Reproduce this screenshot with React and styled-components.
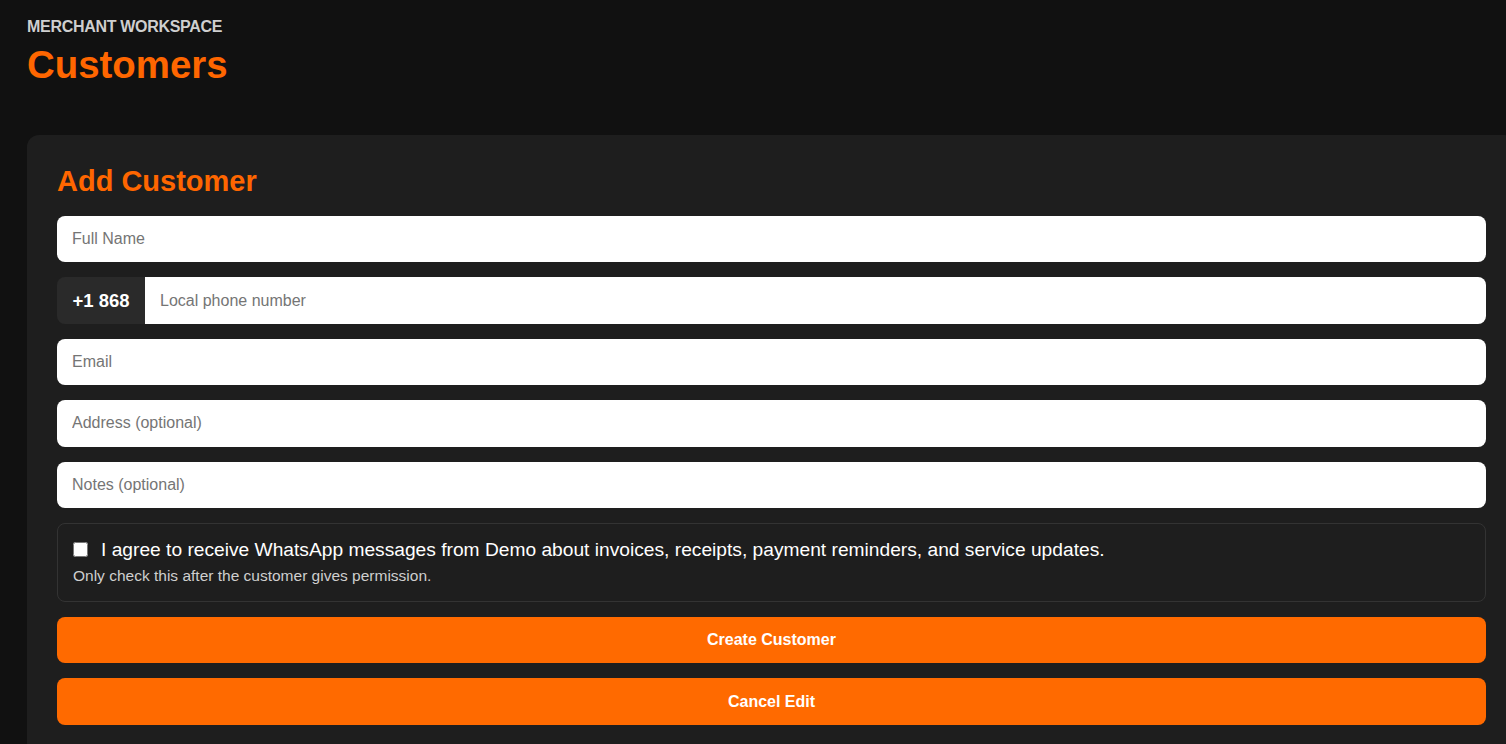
import React from "react";
import styled, { createGlobalStyle } from "styled-components";

const Global = createGlobalStyle`
  html, body { margin: 0; padding: 0; background: #111111; overflow: hidden; }
  body { font-family: "Liberation Sans", Arial, sans-serif; color: #fff; }
  * { box-sizing: border-box; }
`;

const Page = styled.div`
  padding: 18px 0 0 27px;
  width: 1600px;
`;

const Eyebrow = styled.div`
  font-size: 16px;
  font-weight: 700;
  color: #cfcfcf;
  letter-spacing: -0.3px;
  line-height: 18px;
`;

const Title = styled.h1`
  margin: 7px 0 0;
  font-size: 38.4px;
  line-height: 44px;
  font-weight: 700;
  color: #ff6600;
`;

const Card = styled.section`
  margin-top: 48px;
  width: 1489px;
  background: #1e1e1e;
  border-radius: 12px;
  padding: 30px 30px 30px;
  display: flex;
  flex-direction: column;
  gap: 15px;
`;

const CardTitle = styled.h2`
  margin: 0 0 3px;
  font-size: 29px;
  line-height: 33px;
  font-weight: 700;
  color: #ff6600;
`;

const Input = styled.input`
  width: 100%;
  height: 46.4px;
  border: none;
  border-radius: 8px;
  background: #fff;
  padding: 0 15px;
  font-family: inherit;
  font-size: 16px;
  color: #222;
  outline: none;
  &::placeholder { color: #757575; }
`;

const PhoneRow = styled.div`
  display: flex;
  height: 46.4px;
  border-radius: 8px;
  overflow: hidden;
`;

const Prefix = styled.div`
  width: 88px;
  flex: none;
  background: #2a2a2a;
  display: flex;
  align-items: center;
  justify-content: center;
  font-size: 18.5px;
  font-weight: 700;
  color: #fff;
`;

const PhoneInput = styled(Input)`
  height: 100%;
  border-radius: 0;
`;

const Consent = styled.div`
  border: 1px solid #333;
  border-radius: 8px;
  padding: 15px 15px 16px;
  display: flex;
  flex-direction: column;
  gap: 6px;
`;

const ConsentLabel = styled.label`
  display: flex;
  align-items: center;
  gap: 13px;
  font-size: 19.2px;
  line-height: 22px;
  color: #fff;
`;

const Check = styled.input`
  margin: 0;
  width: 15px;
  height: 15px;
  flex: none;
`;

const Hint = styled.div`
  font-size: 15.5px;
  line-height: 18px;
  color: #cfcfcf;
`;

const Button = styled.button`
  width: 100%;
  height: 46.4px;
  border: none;
  border-radius: 8px;
  background: #ff6a00;
  color: #fff;
  font-family: inherit;
  font-size: 16px;
  font-weight: 700;
  cursor: pointer;
`;

export default function App() {
  return (
    <>
      <Global />
      <Page>
        <Eyebrow>MERCHANT WORKSPACE</Eyebrow>
        <Title>Customers</Title>
        <Card>
          <CardTitle>Add Customer</CardTitle>
          <Input placeholder="Full Name" />
          <PhoneRow>
            <Prefix>+1 868</Prefix>
            <PhoneInput placeholder="Local phone number" />
          </PhoneRow>
          <Input placeholder="Email" />
          <Input placeholder="Address (optional)" />
          <Input placeholder="Notes (optional)" />
          <Consent>
            <ConsentLabel>
              <Check type="checkbox" />
              I agree to receive WhatsApp messages from Demo about invoices, receipts, payment reminders, and service updates.
            </ConsentLabel>
            <Hint>Only check this after the customer gives permission.</Hint>
          </Consent>
          <Button>Create Customer</Button>
          <Button>Cancel Edit</Button>
        </Card>
      </Page>
    </>
  );
}
